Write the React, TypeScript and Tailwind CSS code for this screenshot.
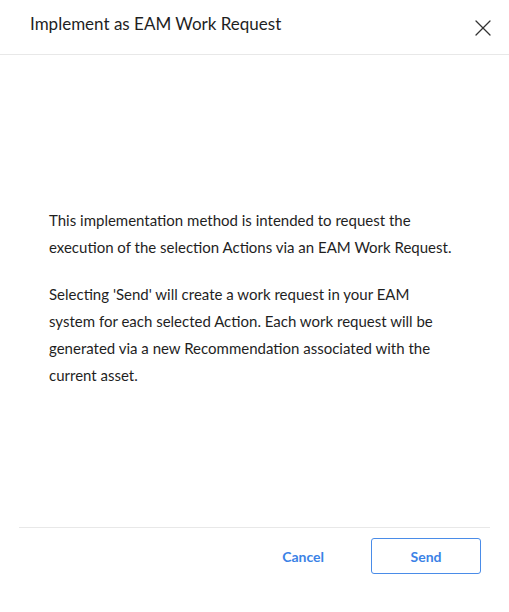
import { X } from 'lucide-react';

export default function App() {
  return (
    <div className="w-[509px] h-[612px] bg-white flex flex-col text-[#1f1f1f]" style={{ fontFamily: 'Lato, "Noto Sans", sans-serif' }}>
      <div className="h-[55px] flex items-center justify-between pl-[30px] pr-[12px] border-b border-[#e8e8e8]">
        <h1 className="text-[17px] leading-none -mt-[8px]">Implement as EAM Work Request</h1>
        <button className="text-[#333] mt-[2px]">
          <X size={28} strokeWidth={1.1} />
        </button>
      </div>

      <div className="flex-1 flex flex-col justify-center px-[49px] pt-[14px] text-[15px] leading-[27px]">
        <p className="whitespace-nowrap">
          This implementation method is intended to request the
          <br />
          execution of the selection Actions via an EAM Work Request.
        </p>
        <p className="mt-[20px] whitespace-nowrap">
          Selecting 'Send' will create a work request in your EAM
          <br />
          system for each selected Action. Each work request will be
          <br />
          generated via a new Recommendation associated with the
          <br />
          current asset.
        </p>
      </div>

      <div className="mx-[19px] border-t border-[#e8e8e8] h-[85px] flex items-start justify-end pt-[10px] pr-[9px] gap-[47px]">
        <button className="h-[36px] text-[14px] font-bold text-[#3b82e6]">Cancel</button>
        <button className="w-[110px] h-[36px] border border-[#4a8ce8] rounded-[3px] text-[14px] font-bold text-[#3b82e6]">
          Send
        </button>
      </div>
    </div>
  );
}
